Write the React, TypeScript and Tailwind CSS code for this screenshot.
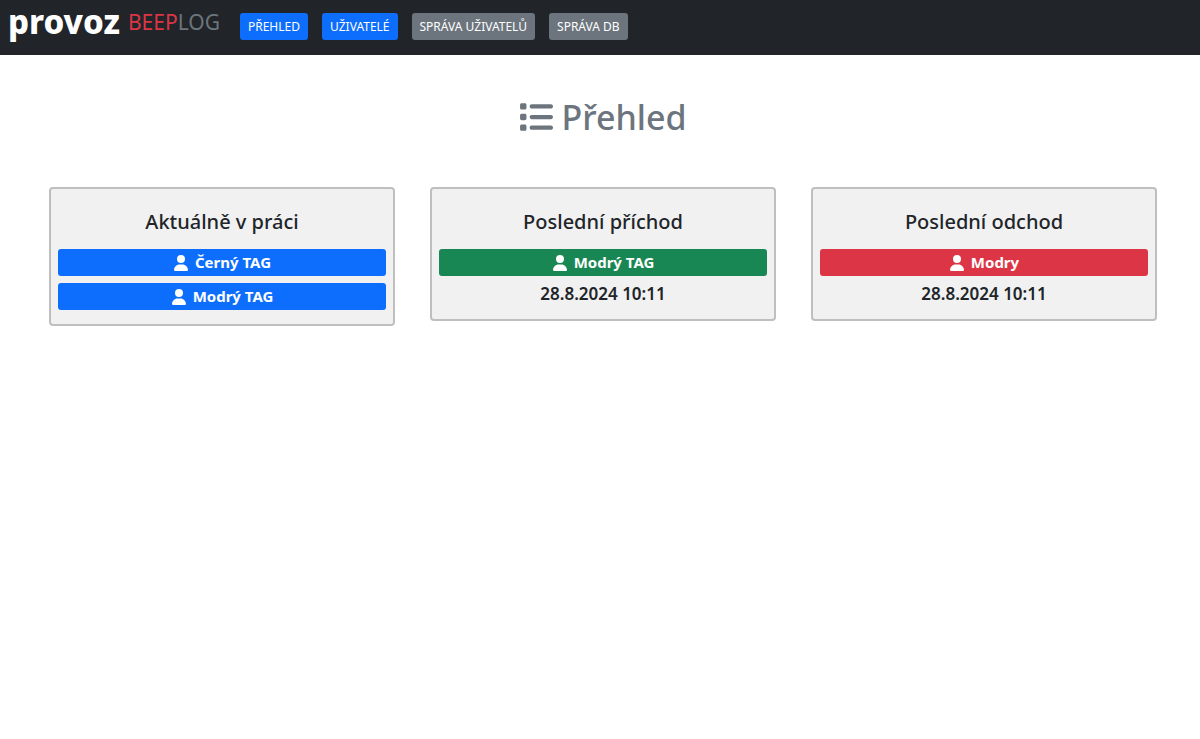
import type { ReactNode } from "react";
import { FaList, FaUser } from "react-icons/fa6";

type NavItem = {
  label: string;
  href: string;
  className: string;
};

const navItems: NavItem[] = [
  { label: "PŘEHLED", href: "#prehled", className: "bg-[#0d6efd]" },
  { label: "UŽIVATELÉ", href: "#uzivatele", className: "bg-[#0d6efd]" },
  { label: "SPRÁVA UŽIVATELŮ", href: "#sprava-uzivatelu", className: "bg-[#6c757d]" },
  { label: "SPRÁVA DB", href: "#sprava-db", className: "bg-[#6c757d]" },
];

function Navbar() {
  return (
    <header className="flex items-center bg-[#212529] pt-1 pb-[7px] pl-2">
      <a href="#prehled" className="mb-2 flex items-center gap-2 whitespace-nowrap">
        <span className="text-[33px] leading-9 font-extrabold text-white">provoz</span>
        <span className="text-[21px] leading-6 text-[#6c757d]">
          <span className="text-[#dc3545]">BEEP</span>LOG
        </span>
      </a>
      <nav className="ml-5 flex gap-[14px]">
        {navItems.map((item) => (
          <a
            key={item.label}
            href={item.href}
            className={`rounded-[3px] px-2 py-1 text-[12px] leading-[19px] whitespace-nowrap text-white ${item.className}`}
          >
            {item.label}
          </a>
        ))}
      </nav>
    </header>
  );
}

function Card({ title, children }: { title: string; children: ReactNode }) {
  return (
    <section className="rounded-[4px] border-2 border-[#bfbfbf] bg-[#f1f1f1] px-[7px] pt-5 pb-[14px] text-center">
      <h2 className="mb-[14px] text-[20px] leading-[26px] font-medium">{title}</h2>
      {children}
    </section>
  );
}

function UserButton({ name, className }: { name: string; className: string }) {
  return (
    <button
      type="button"
      className={`flex h-[27px] w-full items-center justify-center gap-[6px] rounded-[3px] text-[15px] font-bold text-white ${className}`}
    >
      <FaUser className="size-4" />
      {name}
    </button>
  );
}

function CardTime({ children }: { children: ReactNode }) {
  return <p className="mt-[6px] text-[17px] leading-[23px] font-semibold">{children}</p>;
}

export default function App() {
  return (
    <div className="min-h-screen bg-white font-['Noto_Sans',sans-serif] text-[#212529]">
      <Navbar />
      <main className="pr-[43px] pl-[49px]">
        <h1 className="mt-10 flex items-center justify-center gap-2 text-[34px] leading-[44px] font-medium text-[#6c757d]">
          <FaList />
          Přehled
        </h1>
        <div className="mt-12 grid grid-cols-3 items-start gap-[35px]">
          <Card title="Aktuálně v práci">
            <div className="flex flex-col gap-[7px]">
              <UserButton name="Černý TAG" className="bg-[#0d6efd]" />
              <UserButton name="Modrý TAG" className="bg-[#0d6efd]" />
            </div>
          </Card>
          <Card title="Poslední příchod">
            <UserButton name="Modrý TAG" className="bg-[#198754]" />
            <CardTime>28.8.2024 10:11</CardTime>
          </Card>
          <Card title="Poslední odchod">
            <UserButton name="Modry" className="bg-[#dc3545]" />
            <CardTime>28.8.2024 10:11</CardTime>
          </Card>
        </div>
      </main>
    </div>
  );
}
